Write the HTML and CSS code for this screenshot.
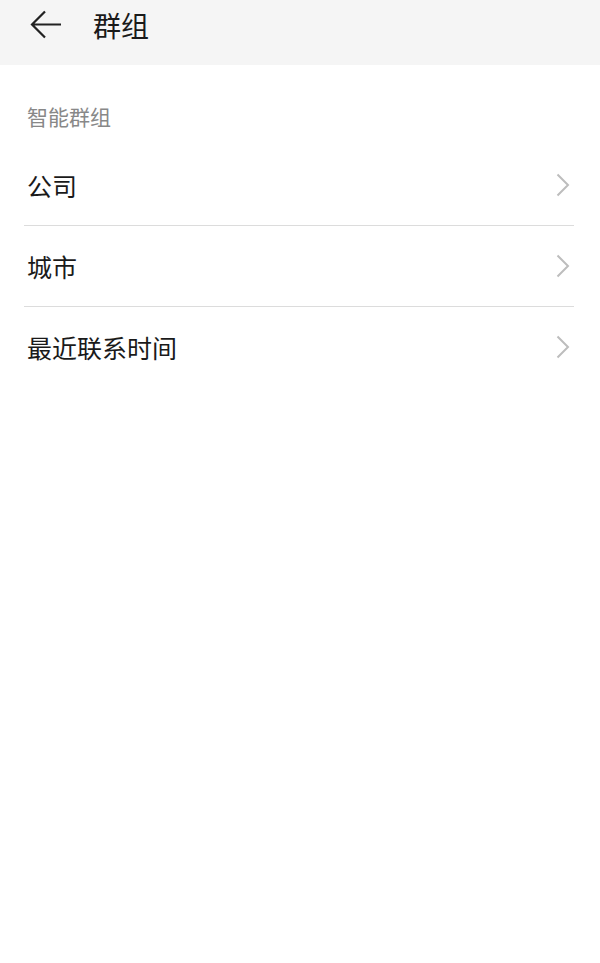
FILE: index.html
```html
<!DOCTYPE html>
<html lang="zh">

<head>
    <meta charset="UTF-8">
    <meta name="viewport" content="width=device-width, initial-scale=1.0">
    <title>群组</title>
    <link rel="stylesheet" href="styles.css">
</head>

<body>
    <div class="header">
        <svg class="back" width="32" height="30" viewBox="0 0 32 30">
            <path d="M2 14.5 H31 M15 1.5 L2 14.5 L15 27.5" fill="none" stroke="#222" stroke-width="2.2" />
        </svg>
        <div class="title">群组</div>
    </div>

    <div class="section-label">智能群组</div>

    <div class="list">
        <div class="row">
            <span>公司</span>
            <svg class="chevron" width="14" height="24" viewBox="0 0 14 24">
                <path d="M1.5 1.5 L12 12 L1.5 22.5" fill="none" stroke="#bdbdbd" stroke-width="2" />
            </svg>
        </div>
        <div class="row">
            <span>城市</span>
            <svg class="chevron" width="14" height="24" viewBox="0 0 14 24">
                <path d="M1.5 1.5 L12 12 L1.5 22.5" fill="none" stroke="#bdbdbd" stroke-width="2" />
            </svg>
        </div>
        <div class="row">
            <span>最近联系时间</span>
            <svg class="chevron" width="14" height="24" viewBox="0 0 14 24">
                <path d="M1.5 1.5 L12 12 L1.5 22.5" fill="none" stroke="#bdbdbd" stroke-width="2" />
            </svg>
        </div>
    </div>
</body>

</html>
```

FILE: styles.css
```css
body {
    margin: 0;
    font-family: "Noto Sans CJK SC", "Noto Sans", sans-serif;
    background-color: #fff;
    color: #1a1a1a;
}

.header {
    height: 65px;
    background-color: #f5f5f5;
    display: flex;
    align-items: flex-start;
    padding-left: 30px;
    box-sizing: border-box;
}

.back {
    margin-top: 10px;
}

.title {
    font-size: 28px;
    line-height: 50px;
    margin-left: 31px;
    color: #1a1a1a;
}

.section-label {
    font-size: 21px;
    color: #888;
    padding: 35px 0 0 27px;
    line-height: 32px;
}

.list {
    margin: 13px 26px 0 24px;
}

.row {
    height: 80px;
    display: flex;
    align-items: center;
    justify-content: space-between;
    padding-left: 3px;
    padding-right: 4px;
    font-size: 25px;
    border-bottom: 1px solid #dcdcdc;
}

.row:last-child {
    border-bottom: none;
}
```
